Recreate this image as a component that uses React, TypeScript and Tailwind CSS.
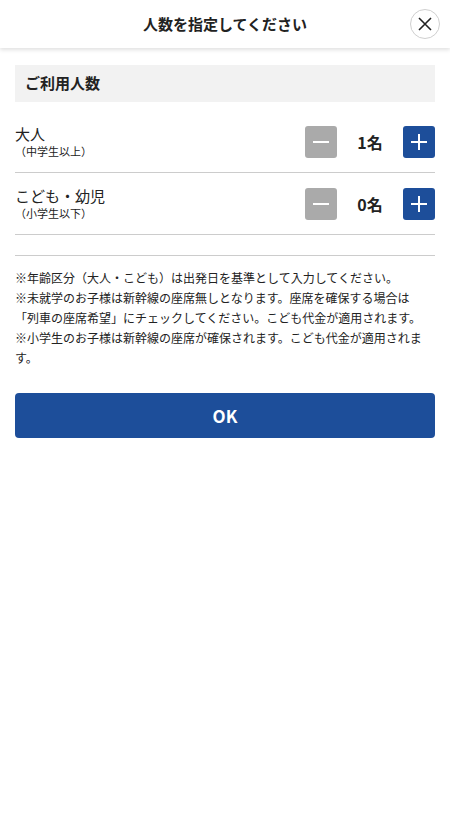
import { useState } from "react";

const font = {
  fontFamily: '"Noto Sans CJK JP", "Noto Sans", sans-serif',
};

type Row = {
  key: string;
  label: string;
  sub: string;
};

const rows: Row[] = [
  { key: "adult", label: "大人", sub: "（中学生以上）" },
  { key: "child", label: "こども・幼児", sub: "（小学生以下）" },
];

function MinusIcon() {
  return (
    <svg width="18" height="18" viewBox="0 0 18 18" fill="none">
      <path d="M1 9h16" stroke="white" strokeWidth="2" />
    </svg>
  );
}

function PlusIcon() {
  return (
    <svg width="18" height="18" viewBox="0 0 18 18" fill="none">
      <path d="M1 9h16M9 1v16" stroke="white" strokeWidth="2" />
    </svg>
  );
}

export default function App() {
  const [counts, setCounts] = useState<Record<string, number>>({
    adult: 1,
    child: 0,
  });

  const change = (key: string, d: number) =>
    setCounts((c) => ({ ...c, [key]: Math.max(0, c[key] + d) }));

  return (
    <div className="min-h-screen bg-white text-[#222]" style={font}>
      {/* Header */}
      <header className="relative h-12 flex items-center justify-center bg-white shadow-[0_2px_4px_rgba(0,0,0,0.12)]">
        <h1 className="text-[15px] font-bold">人数を指定してください</h1>
        <button className="absolute right-[10px] top-[9px] w-[30px] h-[30px] rounded-full border border-[#cfcfcf] bg-white flex items-center justify-center">
          <svg width="14" height="14" viewBox="0 0 14 14" fill="none">
            <path d="M1 1l12 12M13 1L1 13" stroke="#222" strokeWidth="1.6" />
          </svg>
        </button>
      </header>

      <main className="px-[15px] pt-[17px]">
        {/* Section title */}
        <div className="h-[37px] bg-[#f2f2f2] px-[10px] flex items-center">
          <h2 className="text-[15px] font-bold">ご利用人数</h2>
        </div>

        {/* Counters */}
        <div className="mt-[9px]">
          {rows.map((r) => (
            <div
              key={r.key}
              className="flex items-center justify-between h-[62px] border-b border-[#cccccc]"
            >
              <div className="flex flex-col">
                <span className="text-[15px] leading-[20px]">{r.label}</span>
                <span className="text-[11px] leading-[15px]">{r.sub}</span>
              </div>
              <div className="flex items-center">
                <button
                  onClick={() => change(r.key, -1)}
                  className="w-8 h-8 rounded-[3px] bg-[#aaaaaa] flex items-center justify-center"
                >
                  <MinusIcon />
                </button>
                <span className="w-[66px] text-center text-[16px] font-bold">
                  {counts[r.key]}名
                </span>
                <button
                  onClick={() => change(r.key, 1)}
                  className="w-8 h-8 rounded-[3px] bg-[#1d4e9a] flex items-center justify-center"
                >
                  <PlusIcon />
                </button>
              </div>
            </div>
          ))}
        </div>

        {/* Notes */}
        <div className="mt-5 border-t border-[#cccccc] pt-[12px] text-[12px] leading-[20px]">
          <p>※年齢区分（大人・こども）は出発日を基準として入力してください。</p>
          <p>
            ※未就学のお子様は新幹線の座席無しとなります。座席を確保する場合は
            <br />
            「列車の座席希望」にチェックしてください。こども代金が適用されます。
          </p>
          <p>
            ※小学生のお子様は新幹線の座席が確保されます。こども代金が適用されます。
          </p>
        </div>

        <button className="mt-[25px] w-full h-[45px] rounded-[4px] bg-[#1d4e9a] text-white text-[17px] font-bold">
          OK
        </button>
      </main>
    </div>
  );
}
